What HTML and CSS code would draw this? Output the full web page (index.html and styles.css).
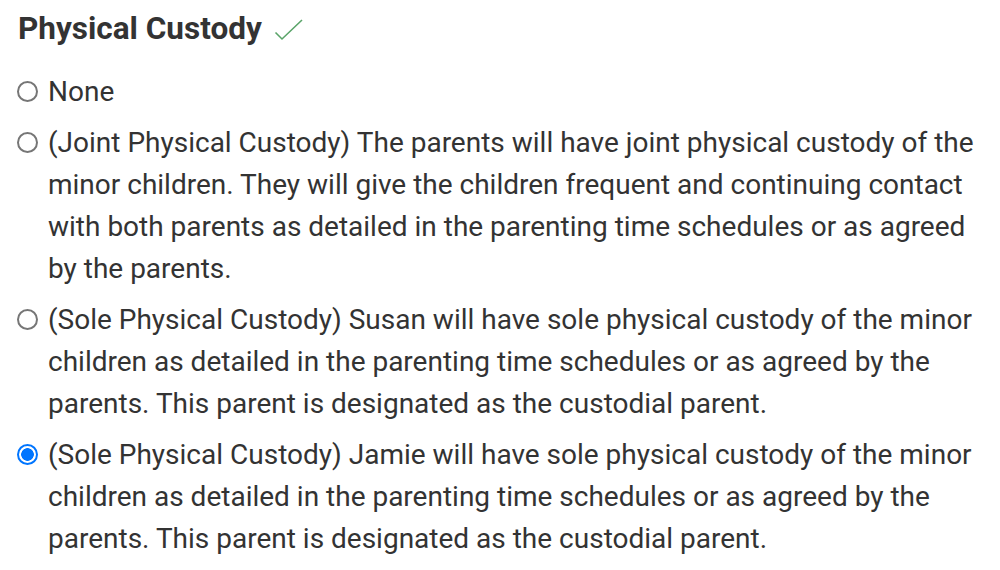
FILE: index.html
```html
<!DOCTYPE html>
<html lang="en">
<head>
<meta charset="utf-8">
<link rel="stylesheet" href="styles.css">
<title>Physical Custody</title>
</head>
<body>
<div class="field">
  <h2 class="title">Physical Custody
    <svg class="check" width="30" height="24" viewBox="0 0 30 24" aria-hidden="true"><path d="M1.5 14.5 L8 21 L28 2" fill="none" stroke="#5aa469" stroke-width="1.6"/></svg>
  </h2>
  <div class="options">
    <label class="option"><span class="radio"></span><span class="text">None</span></label>
    <label class="option"><span class="radio"></span><span class="text">(Joint Physical Custody) The parents will have joint physical custody of the minor children. They will give the children frequent and continuing contact with both parents as detailed in the parenting time schedules or as agreed by the parents.</span></label>
    <label class="option"><span class="radio"></span><span class="text">(Sole Physical Custody) Susan will have sole physical custody of the minor children as detailed in the parenting time schedules or as agreed by the parents. This parent is designated as the custodial parent.</span></label>
    <label class="option"><span class="radio checked"></span><span class="text">(Sole Physical Custody) Jamie will have sole physical custody of the minor children as detailed in the parenting time schedules or as agreed by the parents. This parent is designated as the custodial parent.</span></label>
  </div>
</div>
</body>
</html>
```
FILE: styles.css
```css
html, body {
  margin: 0;
  background: #ffffff;
}
body {
  font-family: Roboto, "Liberation Sans", sans-serif;
  color: #333333;
}
.field {
  padding: 11px 0 0 18px;
  width: 962px;
}
.title {
  margin: 0;
  font-size: 31.5px;
  font-weight: 700;
  line-height: 36px;
  display: flex;
  align-items: center;
  gap: 12px;
}
.check {
  margin-top: 2px;
}
.options {
  margin-top: 24px;
  display: flex;
  flex-direction: column;
  gap: 9px;
}
.option {
  display: flex;
  align-items: flex-start;
  gap: 10px;
  font-size: 28px;
  line-height: 42px;
}
.radio {
  flex: none;
  width: 21px;
  height: 21px;
  box-sizing: border-box;
  border: 2px solid #767676;
  border-radius: 50%;
  margin-top: 10px;
  margin-left: -1px;
}
.radio.checked {
  border: 2.5px solid #0075ff;
  background: radial-gradient(circle, #0075ff 0 6px, #ffffff 6.6px);
}
.text {
  flex: 1;
}
```
